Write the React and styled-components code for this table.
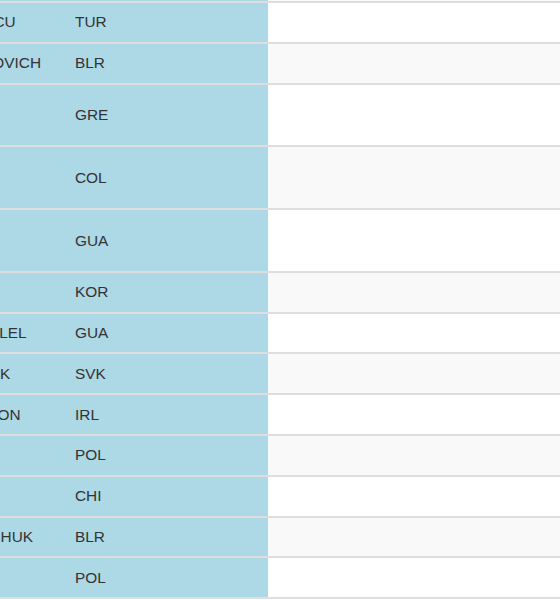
import styled, { createGlobalStyle } from "styled-components";

const GlobalStyle = createGlobalStyle`
  html, body {
    margin: 0;
    padding: 0;
    background: #fff;
    overflow: hidden;
  }
  body {
    font-family: "Liberation Sans", Arial, Helvetica, sans-serif;
    color: #333;
  }
`;

const Viewport = styled.div`
  width: 560px;
  height: 600px;
  overflow: hidden;
`;

// scrolled results table: the name column is partly out of view on the left
const ResultsTable = styled.table`
  border-collapse: collapse;
  table-layout: fixed;
  width: 800px;
  margin: -39.8px 0 0 -120px;
  font-size: 15.4px;
  line-height: 22px;
  border-bottom: 2px solid #dedede;
`;

const Row = styled.tr`
  background: ${(props) => (props.$striped ? "#f9f9f9" : "#fff")};
`;

const Cell = styled.td`
  padding: 8.4px 8.8px;
  border-top: 2px solid #dedede;
  vertical-align: middle;
  text-align: left;
  background: ${(props) => (props.$pinned ? "#add8e6" : "transparent")};
`;

const results = [
  { name: "Ivan NOVAK", country: "CRO", mark: "" },
  { name: "Serkan Ali TOPCU", country: "TUR", mark: "" },
  { name: "Dzianis SIMANOVICH", country: "BLR", mark: "" },
  { name: "Alexandros PAPAMICHAIL", country: "GRE", mark: "" },
  { name: "Éider Fernando ARÉVALO", country: "COL", mark: "" },
  { name: "Erick Bernabé BARRONDO", country: "GUA", mark: "" },
  { name: "KIM Hyun-sub", country: "KOR", mark: "" },
  { name: "Jose Alberto CALEL", country: "GUA", mark: "" },
  { name: "Branislav HUDAK", country: "SVK", mark: "" },
  { name: "Robert HARRISON", country: "IRL", mark: "" },
  { name: "Adam NOWAK", country: "POL", mark: "" },
  { name: "Yerko ARAYA", country: "CHI", mark: "" },
  { name: "Pyotr STEPANCHUK", country: "BLR", mark: "" },
  { name: "Jan SUDOŁ", country: "POL", mark: "" },
];

export default function App() {
  return (
    <>
      <GlobalStyle />
      <Viewport>
        <ResultsTable>
          <colgroup>
            <col style={{ width: 186.2 }} />
            <col style={{ width: 201.8 }} />
            <col style={{ width: 412 }} />
          </colgroup>
          <tbody>
            {results.map((r, i) => (
              <Row key={i} $striped={i % 2 === 0}>
                <Cell $pinned>{r.name}</Cell>
                <Cell $pinned>{r.country}</Cell>
                <Cell>{r.mark}</Cell>
              </Row>
            ))}
          </tbody>
        </ResultsTable>
      </Viewport>
    </>
  );
}
